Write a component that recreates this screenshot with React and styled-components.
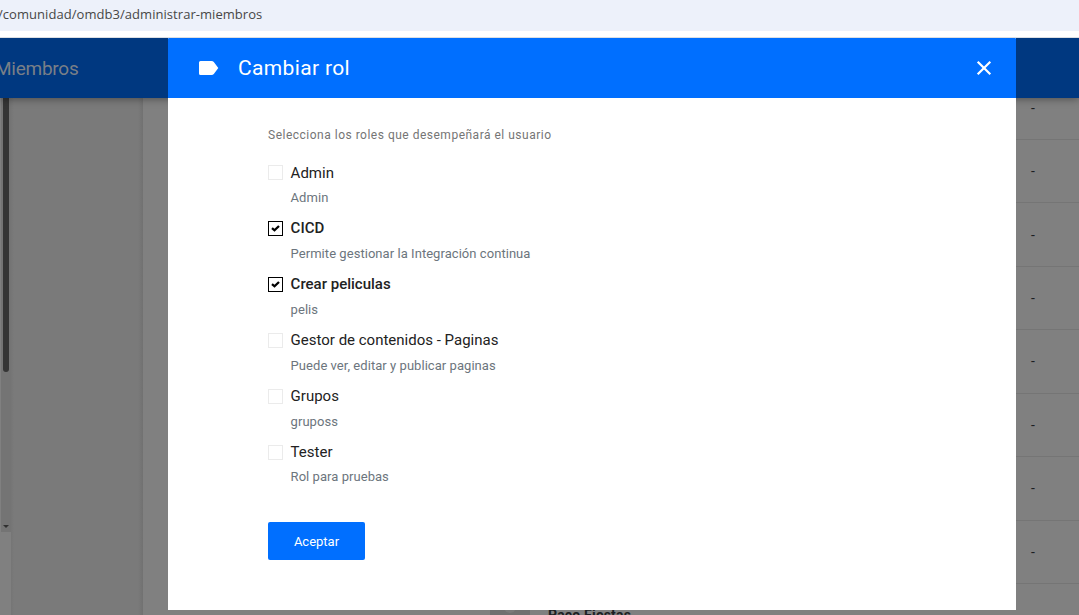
import React from "react";
import styled, { createGlobalStyle } from "styled-components";

const GlobalStyle = createGlobalStyle`
  *, *::before, *::after { box-sizing: border-box; }
  body { margin: 0; overflow: hidden; font-family: Roboto, "Liberation Sans", sans-serif; }
`;

const Page = styled.div`
  display: flex;
  flex-direction: column;
  width: 100%;
  height: 615px;
  overflow: hidden;
  background: #fff;
`;

const AddressBar = styled.div`
  flex: none;
  height: 31px;
  line-height: 29px;
  background: #edf1fa;
  color: #474747;
  font-family: "Open Sans", "Noto Sans", sans-serif;
  font-size: 13px;
  letter-spacing: 0.05px;
  text-indent: -2px;
  white-space: nowrap;
`;

const Toolbar = styled.div`
  flex: none;
  height: 7px;
  border-bottom: 1px solid #dcdfe3;
`;

const Stage = styled.div`
  position: relative;
  flex: 1;
  display: flex;
  flex-direction: column;
  min-height: 0;
  overflow: hidden;
  background: #808080;
`;

const SiteHeader = styled.header`
  position: relative;
  z-index: 1;
  flex: none;
  height: 60px;
  line-height: 61px;
  background: #003880;
  color: #797f87;
  font-size: 19px;
  font-weight: 400;
  letter-spacing: -0.25px;
  box-shadow: 0 1px 8px rgba(0, 0, 0, 0.4);
`;

const SectionName = styled.div`
  margin-left: -5px;
`;

const Body = styled.div`
  flex: 1;
  display: flex;
  min-height: 0;
`;

const MenuColumn = styled.div`
  width: 11px;
  padding-left: 1px;
`;

const Track = styled.div`
  display: flex;
  flex-direction: column;
  justify-content: space-between;
  align-items: center;
  height: 434px;
  background: #747474;
`;

const Thumb = styled.div`
  width: 6px;
  height: 274px;
  border-radius: 0 0 3px 3px;
  background: #353535;
`;

const ArrowDown = styled.div`
  margin-bottom: 4px;
  border: 3px solid transparent;
  border-top-color: #303030;
  border-bottom: 0;
`;

const Gutter = styled.aside`
  width: 132px;
  background: linear-gradient(90deg, #757575, #7a7a7a 3px, #7a7a7a 127px, #717171);
`;

const MemberList = styled.main`
  flex: 1;
  overflow: hidden;
  padding-left: 30px;
`;

const Rows = styled.div`
  margin-top: -21.5px;
`;

const MemberRow = styled.div`
  display: flex;
  align-items: center;
  height: 63.45px;
  padding-left: 317px;
  border-bottom: 1px solid #757575;
  color: #1c1f23;
  font-size: 14px;
`;

const Avatar = styled.div`
  display: flex;
  justify-content: center;
  width: 40px;
  height: 40px;
  padding-top: 6px;
  border-radius: 10px;
  background: #707070;
  &::before {
    content: "";
    width: 12px;
    height: 12px;
    border-radius: 50%;
    background: #7a7a7a;
  }
`;

const MemberName = styled.div`
  width: 483px;
  margin-left: 18px;
  font-weight: 700;
  letter-spacing: 0.2px;
`;

const Dialog = styled.section`
  position: absolute;
  z-index: 2;
  top: 0;
  left: 168px;
  width: 848px;
  height: 572px;
  background: #fff;
`;

const DialogHeader = styled.div`
  display: flex;
  align-items: center;
  height: 60px;
  padding: 0 24px 0 30px;
  border-radius: 1px 1px 0 0;
  background: #006fff;
  color: #fff;
`;

const DialogTitle = styled.h1`
  flex: 1;
  margin: 0 0 0 19px;
  font-size: 21px;
  font-weight: 400;
  line-height: 60px;
  letter-spacing: 0.35px;
`;

const CloseButton = styled.button`
  display: flex;
  padding: 0;
  border: 0;
  background: none;
  color: inherit;
`;

const Form = styled.form`
  padding: 28px 100px 0;
`;

const Hint = styled.p`
  margin: 0 0 16.5px;
  color: #757575;
  font-size: 12px;
  line-height: 18px;
  letter-spacing: 0.5px;
`;

const RoleList = styled.ul`
  display: flex;
  flex-direction: column;
  margin: 0;
  padding: 0;
  list-style: none;
`;

const Role = styled.li`
  display: grid;
  grid-template-columns: 15px 1fr;
  column-gap: 7.6px;
  grid-template-rows: 24px 31.95px;

  &:first-child > :last-child,
  &:last-child > :last-child {
    line-height: 25px;
  }
`;

const Box = styled.span`
  display: flex;
  align-items: center;
  justify-content: center;
  align-self: center;
  width: 15px;
  height: 15px;
  border: 1px solid ${(p) => (p.$checked ? "#000" : "#ebebeb")};
`;

const RoleName = styled.span`
  color: #222;
  font-size: 15px;
  font-weight: ${(p) => (p.$checked ? 500 : 400)};
  line-height: 24px;
`;

const RoleDetail = styled.span`
  grid-column: 2;
  color: #6c757d;
  font-size: 13px;
  line-height: 27px;
  letter-spacing: 0.05px;
`;

const AcceptButton = styled.button`
  display: block;
  width: 97px;
  height: 38px;
  margin: 26px 0 0;
  padding: 0;
  border: 0;
  border-radius: 2px;
  background: #006fff;
  color: #fff;
  font: 450 13px/39px Roboto, sans-serif;
`;

const roles = [
  { name: "Admin", detail: "Admin" },
  { name: "CICD", detail: "Permite gestionar la Integración continua", checked: true },
  { name: "Crear peliculas", detail: "pelis", checked: true },
  { name: "Gestor de contenidos - Paginas", detail: "Puede ver, editar y publicar paginas" },
  { name: "Grupos", detail: "gruposs" },
  { name: "Tester", detail: "Rol para pruebas" },
];

const members = ["", "", "", "", "", "", "", "", "Paco Fiestas"];

function LabelIcon() {
  return (
    <svg width="21" height="16" viewBox="0 0 21 16" fill="currentColor">
      <path d="M2.5 1H13.5Q15 1 15.8 2.1L20.3 8L15.8 13.9Q15 15 13.5 15H2.5Q1 15 1 13.5V2.5Q1 1 2.5 1Z" />
    </svg>
  );
}

function CloseIcon() {
  return (
    <svg width="16" height="16" viewBox="0 0 16 16" fill="none" stroke="currentColor" strokeWidth="2.2">
      <path d="M1.7 1.7L14.3 14.3M14.3 1.7L1.7 14.3" />
    </svg>
  );
}

function CheckIcon() {
  return (
    <svg width="9" height="7" viewBox="0 0 9 7" fill="none" stroke="#000" strokeWidth="2.3">
      <path d="M1 3.2L3.5 5.3L8 1" />
    </svg>
  );
}

export default function App() {
  return (
    <Page>
      <GlobalStyle />
      <AddressBar>/comunidad/omdb3/administrar-miembros</AddressBar>
      <Toolbar />
      <Stage>
        <SiteHeader>
          <SectionName>Miembros</SectionName>
        </SiteHeader>
        <Body>
          <MenuColumn>
            <Track>
              <Thumb />
              <ArrowDown />
            </Track>
          </MenuColumn>
          <Gutter />
          <MemberList>
            <Rows>
              {members.map((name, i) => (
                <MemberRow key={i}>
                  <Avatar />
                  <MemberName>{name}</MemberName>
                  <span>-</span>
                </MemberRow>
              ))}
            </Rows>
          </MemberList>
        </Body>
        <Dialog>
          <DialogHeader>
            <LabelIcon />
            <DialogTitle>Cambiar rol</DialogTitle>
            <CloseButton type="button" aria-label="Cerrar">
              <CloseIcon />
            </CloseButton>
          </DialogHeader>
          <Form>
            <Hint>Selecciona los roles que desempeñará el usuario</Hint>
            <RoleList>
              {roles.map((role) => (
                <Role key={role.name}>
                  <Box $checked={role.checked}>{role.checked && <CheckIcon />}</Box>
                  <RoleName $checked={role.checked}>{role.name}</RoleName>
                  <RoleDetail>{role.detail}</RoleDetail>
                </Role>
              ))}
            </RoleList>
            <AcceptButton type="button">Aceptar</AcceptButton>
          </Form>
        </Dialog>
      </Stage>
    </Page>
  );
}
